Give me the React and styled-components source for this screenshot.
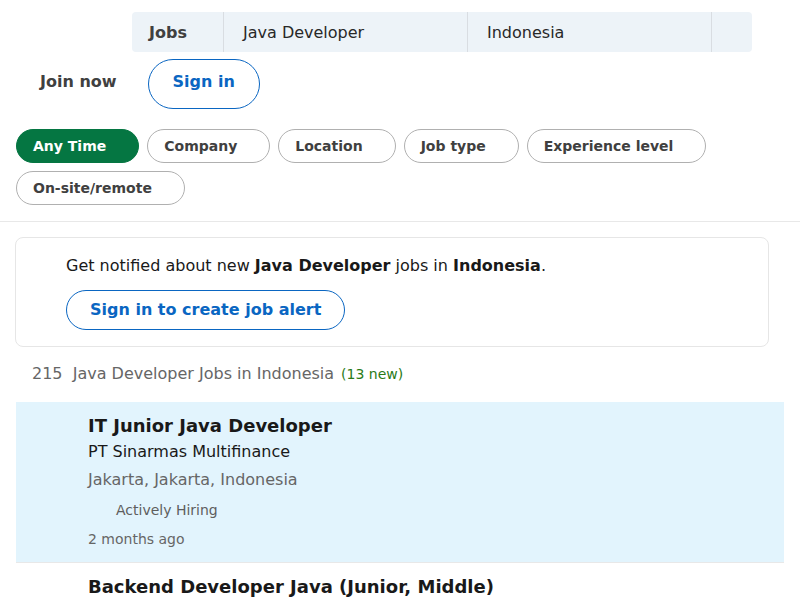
import styled, { createGlobalStyle } from 'styled-components';

const GlobalStyle = createGlobalStyle`
  body {
    margin: 0;
    background: #fff;
    font-family: 'DejaVu Sans', 'Liberation Sans', sans-serif;
    color: rgba(0, 0, 0, 0.9);
  }
`;

const Header = styled.header`
  padding-top: 12px;
`;

const SearchBar = styled.div`
  margin-left: 132px;
  width: 620px;
  height: 40px;
  display: grid;
  grid-template-columns: 92px 244px 244px 1fr;
  background: #edf3f8;
  border-radius: 4px;
`;

const SearchCell = styled.div`
  display: flex;
  align-items: center;
  padding-left: ${p => (p.$label ? '17px' : '19px')};
  font-size: 16px;
  font-weight: ${p => (p.$label ? 700 : 400)};
  color: ${p => (p.$label ? '#404040' : '#282828')};
  border-right: ${p => (p.$last ? 'none' : '1px solid #d9dde2')};
`;

const Nav = styled.nav`
  display: flex;
  align-items: center;
  gap: 19px;
  padding: 7px 0 0 28px;
`;

const JoinLink = styled.a`
  padding: 0 12px;
  margin-bottom: 4px;
  font-size: 16px;
  font-weight: 700;
  color: #404040;
  line-height: 24px;
`;

const OutlineButton = styled.button`
  font-family: inherit;
  font-size: 16px;
  font-weight: 700;
  color: #0a66c2;
  background: #fff;
  border: 1px solid #0a66c2;
  border-radius: ${p => (p.$h ? p.$h / 2 : 25)}px;
  height: ${p => p.$h || 50}px;
  padding: 0 ${p => p.$px || 24}px ${p => p.$pb || 0}px;
  line-height: 20px;
`;

const Filters = styled.div`
  display: flex;
  flex-wrap: wrap;
  gap: 8px;
  padding: 20px 16px 16px;
  border-bottom: 1px solid #e8e8e8;
`;

const Pill = styled.button`
  font-family: inherit;
  font-size: 14px;
  font-weight: 700;
  line-height: 20px;
  height: 34px;
  padding: 0 32px 0 16px;
  border-radius: 17px;
  border: 1px solid ${p => (p.$active ? '#057642' : '#b0b0b0')};
  background: ${p => (p.$active ? '#057642' : '#fff')};
  color: ${p => (p.$active ? '#fff' : '#404040')};
  text-align: left;
`;

const Main = styled.main`
  padding: 15px 16px 0 15px;
`;

const AlertCard = styled.section`
  width: 754px;
  height: 110px;
  box-sizing: border-box;
  border: 1px solid #e6e6e6;
  border-radius: 8px;
  padding: 16px 0 16px 50px;
`;

const AlertText = styled.p`
  margin: 0 0 12px;
  font-size: 16px;
  line-height: 24px;
  color: #191919;
  b {
    font-weight: 700;
  }
`;

const Count = styled.h1`
  margin: 15px 0 16px 17px;
  font-size: 16px;
  font-weight: 400;
  line-height: 24px;
  color: #666;
  span {
    margin-left: 7px;
    font-size: 14px;
    color: #2a7b17;
  }
`;

const JobList = styled.ul`
  list-style: none;
  margin: 0 0 0 1px;
  padding: 0;
  width: 768px;
`;

const JobCard = styled.li`
  padding: 12px 0 13px 72px;
  background: ${p => (p.$active ? '#e2f4fd' : '#fff')};
  border-bottom: 1px solid #e8e8e8;
`;

const JobTitle = styled.h3`
  margin: 0 0 2px;
  font-size: 18px;
  font-weight: 700;
  line-height: 24px;
  color: #191919;
`;

const Company = styled.h4`
  margin: 0;
  font-size: 16px;
  font-weight: 400;
  line-height: 24px;
  color: #191919;
`;

const Location = styled.div`
  margin-top: 4px;
  font-size: 16px;
  line-height: 24px;
  color: #666;
`;

const Hiring = styled.div`
  margin: 8px 0 0 28px;
  font-size: 14px;
  line-height: 20px;
  color: #5e5e5e;
`;

const Posted = styled.time`
  display: block;
  margin-top: 9px;
  font-size: 14px;
  line-height: 20px;
  color: #666;
`;

const filters = [
  { label: 'Any Time', active: true },
  { label: 'Company' },
  { label: 'Location' },
  { label: 'Job type' },
  { label: 'Experience level' },
  { label: 'On-site/remote' },
];

const jobs = [
  {
    title: 'IT Junior Java Developer',
    company: 'PT Sinarmas Multifinance',
    location: 'Jakarta, Jakarta, Indonesia',
    hiring: true,
    posted: '2 months ago',
  },
  {
    title: 'Backend Developer Java (Junior, Middle)',
    company: 'PT Bank Jago Tbk',
    location: 'Jakarta, Indonesia',
    posted: '1 month ago',
  },
];

const App = () => (
  <>
    <GlobalStyle />
    <Header>
      <SearchBar>
        <SearchCell $label>Jobs</SearchCell>
        <SearchCell>Java Developer</SearchCell>
        <SearchCell>Indonesia</SearchCell>
        <SearchCell $last />
      </SearchBar>
      <Nav>
        <JoinLink>Join now</JoinLink>
        <OutlineButton $pb={5}>Sign in</OutlineButton>
      </Nav>
    </Header>
    <Filters>
      {filters.map(f => (
        <Pill key={f.label} $active={f.active}>
          {f.label}
        </Pill>
      ))}
    </Filters>
    <Main>
      <AlertCard>
        <AlertText>
          Get notified about new <b>Java Developer</b> jobs in <b>Indonesia</b>.
        </AlertText>
        <OutlineButton $h={40} $px={23}>
          Sign in to create job alert
        </OutlineButton>
      </AlertCard>
      <Count>
        215 &nbsp;Java Developer Jobs in Indonesia<span>(13 new)</span>
      </Count>
      <JobList>
        {jobs.map((job, i) => (
          <JobCard key={job.title} $active={i === 0}>
            <JobTitle>{job.title}</JobTitle>
            <Company>{job.company}</Company>
            <Location>{job.location}</Location>
            {job.hiring && <Hiring>Actively Hiring</Hiring>}
            <Posted>{job.posted}</Posted>
          </JobCard>
        ))}
      </JobList>
    </Main>
  </>
);

export default App;
